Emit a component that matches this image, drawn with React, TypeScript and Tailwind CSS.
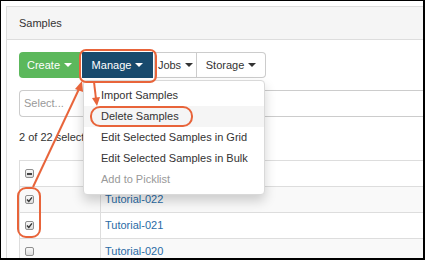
import React from 'react';

const rows = [
  { name: 'Tutorial-022', checked: true, striped: true },
  { name: 'Tutorial-021', checked: true, striped: false },
  { name: 'Tutorial-020', checked: false, striped: true },
];

function Caret({ light }: { light?: boolean }) {
  return (
    <span
      className={`inline-block w-0 h-0 ml-[4px] border-x-[4px] border-x-transparent border-t-[4px] ${light ? 'border-t-white' : 'border-t-[#333]'}`}
    />
  );
}

function Box({ state }: { state: 'checked' | 'mixed' | 'empty' }) {
  return (
    <span className="flex items-center justify-center w-[9px] h-[9px] rounded-[2px] border border-[#8f8f8f] bg-gradient-to-b from-[#fafafa] to-[#dcdcdc]">
      {state === 'checked' && (
        <svg width="7" height="7" viewBox="0 0 7 7">
          <path d="M1 3.6 L2.8 5.4 L6 1.4" stroke="#333" strokeWidth="1.4" fill="none" />
        </svg>
      )}
      {state === 'mixed' && <span className="w-[5px] h-[2px] bg-[#444]" />}
    </span>
  );
}

export default function App() {
  return (
    <div className="fixed left-0 top-0 w-[425px] h-[260px] overflow-hidden bg-white border-l border-t border-r-2 border-b-2 border-black font-['Liberation_Sans',Arial,sans-serif] text-[11px] text-[#333]">
      <div className="flex h-full pl-[5px] pt-[5px]">
        <div className="flex-1 border-l border-t border-[#ddd]">
          <div className="h-[33px] bg-[#f5f5f5] border-b border-[#ddd] flex items-center pl-[12px] pt-[1px]">Samples</div>
          <div className="pl-[12px] pt-[12px]">
            <div className="flex h-[26px]">
              <button className="w-[61px] bg-[#5cb85c] text-white rounded-l-[4px] flex items-center justify-center">
                Create<Caret light />
              </button>
              <button className="ml-[2px] w-[71px] bg-[#184a6d] text-white flex items-center justify-center">
                Manage<Caret light />
              </button>
              <button className="ml-[1px] w-[43px] border border-[#ccc] flex items-center justify-center">
                Jobs<Caret />
              </button>
              <button className="w-[69px] border border-l-0 border-[#ccc] rounded-r-[4px] flex items-center justify-center">
                Storage<Caret />
              </button>
            </div>
            <div className="mt-[12px] h-[27px] border border-r-0 border-[#ccc] rounded-l-[4px] flex items-center pl-[4px] text-[#999]">
              Select...
            </div>
            <div className="pt-[13px] h-[43px] leading-[14px]">2 of 22 selected</div>
            <div className="border-l border-[#ddd]">
              <div className="flex h-[26px] border-t border-[#ddd]">
                <div className="w-[80px] flex items-center pl-[5px]">
                  <Box state="mixed" />
                </div>
                <div className="flex-1 border-l border-[#ddd]" />
              </div>
              {rows.map((r) => (
                <div key={r.name} className={`flex h-[26px] border-t border-[#ddd] ${r.striped ? 'bg-[#f9f9f9]' : 'bg-white'}`}>
                  <div className="w-[80px] flex items-center pl-[5px]">
                    <Box state={r.checked ? 'checked' : 'empty'} />
                  </div>
                  <div className="flex-1 border-l border-[#ddd] flex items-center pl-[4px] text-[#2a6ba5]">{r.name}</div>
                </div>
              ))}
            </div>
          </div>
        </div>
      </div>

      {/* dropdown menu */}
      <div className="absolute left-[82px] top-[79px] w-[182px] bg-white border border-[#d9d9d9] rounded-[4px] shadow-[0_6px_12px_rgba(0,0,0,0.18)] py-[4px]">
        <div className="h-[21px] flex items-center pl-[17px]">Import Samples</div>
        <div className="h-[21px] flex items-center pl-[17px] bg-[#f5f5f5]">Delete Samples</div>
        <div className="h-[21px] flex items-center pl-[17px]">Edit Selected Samples in Grid</div>
        <div className="h-[21px] flex items-center pl-[17px]">Edit Selected Samples in Bulk</div>
        <div className="h-[21px] flex items-center pl-[17px] text-[#999]">Add to Picklist</div>
      </div>

      {/* annotations */}
      <div className="absolute left-[78px] top-[48px] w-[78px] h-[34px] border-2 border-[#e8643a] rounded-[7px]" />
      <div className="absolute left-[89px] top-[105px] w-[103px] h-[21px] border-2 border-[#e8643a] rounded-[10px]" />
      <div className="absolute left-[16px] top-[186px] w-[24px] h-[51px] border-2 border-[#e8643a] rounded-[9px]" />
      <svg className="absolute left-0 top-0 pointer-events-none" width="200" height="200" viewBox="0 0 200 200">
        <line x1="32" y1="186" x2="78" y2="88" stroke="#e8643a" strokeWidth="2" />
        <polygon points="81,80 74,88 82,91" fill="#e8643a" />
        <line x1="93" y1="81" x2="95" y2="98" stroke="#e8643a" strokeWidth="2" />
        <polygon points="96,105 91,97 99,96" fill="#e8643a" />
      </svg>
    </div>
  );
}
